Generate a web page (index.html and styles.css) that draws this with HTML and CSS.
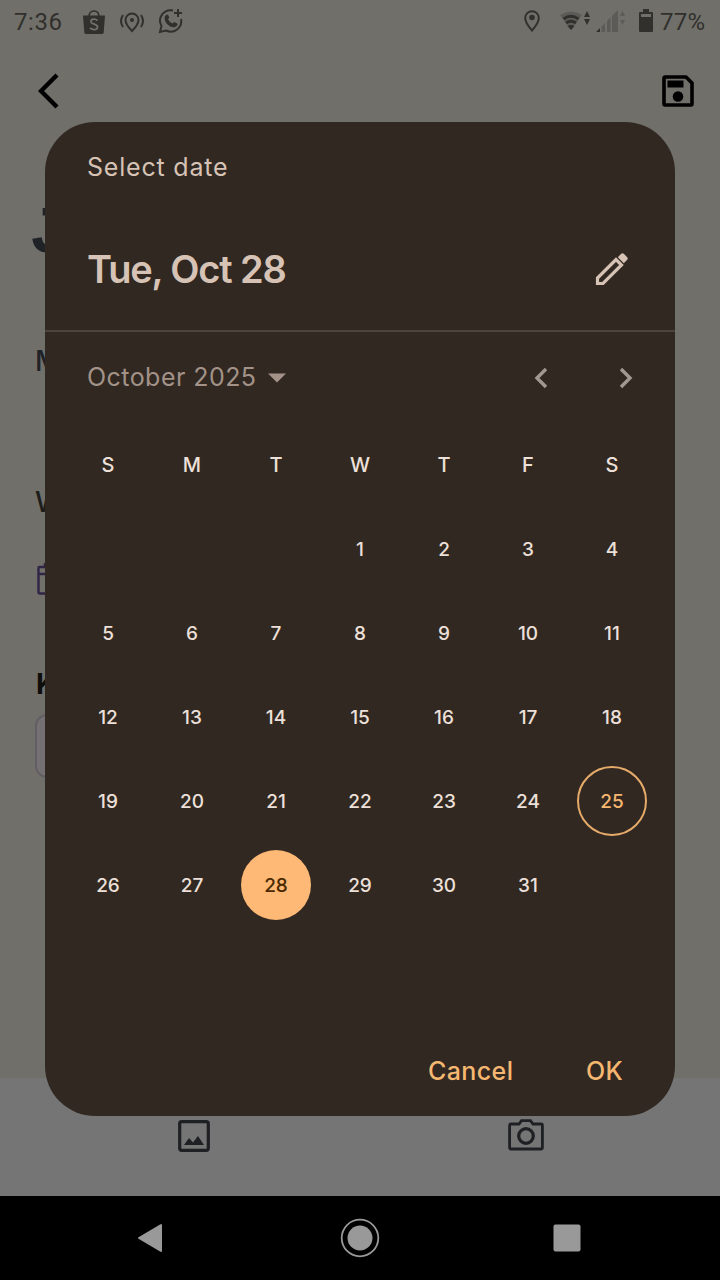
FILE: index.html
```html
<!DOCTYPE html>
<html lang="en">
<head>
<meta charset="utf-8">
<title>Select date</title>
<link rel="stylesheet" href="styles.css">
</head>
<body>
<div class="screen">
  <header class="status">
    <span class="clock">7:36</span>
    <svg class="s-bag" width="22" height="26" viewBox="0 0 22 26"><path d="M6 8C6 4 8 2 11 2s5 2 5 6" fill="none" stroke="#31302d" stroke-width="1.6"/><path d="M0 6.5h22l-1.300 17q-.1 1.500-1.700 1.500H3q-1.600 0-1.700-1.500z" fill="#31302d"/><path d="M14.500 11.500C12 9 7.500 10 8 13c.5 2.500 6.500 2 6.500 5 0 3-4.500 3.500-7.500 1" fill="none" stroke="#706f6a" stroke-width="1.800"/></svg>
    <svg class="s-cast" width="26" height="22" viewBox="0 0 26 22"><g fill="none" stroke="#31302d" stroke-width="2"><path d="M13 20C9 16 6.500 13 6.500 9a6.500 6.500 0 0 1 13 0c0 4-2.500 7-6.500 11z"/><path d="M4 4Q0 10 4 16M22 4q4 6 0 12"/></g><circle cx="13" cy="9" r="2" fill="#31302d"/></svg>
    <svg class="s-chat" width="26" height="26" viewBox="0 0 26 26"><g fill="none" stroke="#31302d" stroke-width="2"><path d="M15 2.500A10.500 10.500 0 0 0 3.500 18L2 24l6-1.500A10.500 10.500 0 0 0 23 11"/><path d="M20 1v8M16 5h8"/></g><path d="M7 8l2-1.500q1 0 1.500 1.200l.8 2-1.300 1.600q1.500 3 4.500 4.300l1.600-1.600 3.300 1.600q.6 2.500-2.400 3.400C12 20.500 5 14 7 8z" fill="#31302d"/></svg>
    <span class="grow"></span>
    <svg class="s-pin" width="16" height="22" viewBox="0 0 16 22"><path d="M8 20.500C4 16 1.200 12 1.200 8a6.800 6.800 0 0 1 13.600 0c0 4-2.800 8-6.800 12.500z" fill="none" stroke="#31302d" stroke-width="1.900"/><circle cx="8" cy="7.500" r="2.800" fill="#31302d"/></svg>
    <svg class="s-wifi" width="30" height="20" viewBox="0 0 30 20"><path d="M0 4Q11 -3 22 4L11 19z" fill="#5c5b57"/><path d="M3.500 8Q11 2.500 18.500 8M6 12q5-3.500 10 0" fill="none" stroke="#31302d" stroke-width="3"/><path d="M7.500 15Q11 13 14.500 15L11 19z" fill="#31302d"/><path d="M27 0l3 6h-6zM27 14l3-6h-6z" fill="#31302d"/></svg>
    <svg class="s-cell" width="29" height="22" viewBox="0 0 29 22"><path d="M0 22l4-4v4z" fill="#31302d"/><path d="M5.500 16.500L9 13v9H5.500zM11 11l3.500-3.500V22H11zM16 6l2-2v18h-2zM18 4l4-4v22h-4z" fill="#5c5b57"/><path d="M26.500 1l2.500 5h-5zM26.500 15l2.500-5h-5z" fill="#5c5b57"/></svg>
    <svg class="s-batt" width="14" height="23" viewBox="0 0 14 23"><path d="M4 0h6v3h3q1 0 1 1v18q0 1-1 1H1q-1 0-1-1V4q0-1 1-1h3z" fill="#31302d"/><path d="M2 5h10v3H2z" fill="#706f6a"/></svg>
    <span class="percent">77%</span>
  </header>
  <nav class="appbar">
    <svg width="22" height="36" viewBox="0 0 22 36"><path d="M19 2L3 18l16 16" fill="none" stroke="#000" stroke-width="4.400"/></svg>
    <svg width="32" height="32" viewBox="0 0 32 32"><path d="M3 2h21l6 6v21q0 1-1 1H3q-1 0-1-1V3q0-1 1-1z" fill="none" stroke="#000" stroke-width="3.600" stroke-linejoin="round"/><path d="M5.500 5.500h16v7h-16z"/><circle cx="16" cy="21.500" r="5.300"/></svg>
  </nav>
  <main class="form">
    <div class="heading">J</div>
    <div class="label label-m">M</div>
    <div class="label label-w">W</div>
    <svg class="cal" width="32" height="34" viewBox="0 0 32 34"><path d="M2 5h28v26.500H3q-1.500 0-1.500-1.500V6q0-1 1-1M2 12h28M8 1v4M24 1v4" fill="none" stroke="#302546" stroke-width="2.400"/></svg>
    <div class="label label-k">K</div>
    <div class="field"></div>
  </main>
  <footer class="tools">
    <svg class="t-photo" width="32" height="32" viewBox="0 0 32 32"><rect x="1.700" y="1.700" width="28.600" height="28.600" rx="2" fill="none" stroke="#1f2023" stroke-width="3.200"/><path d="M6 25l5-7 4 4.500 5-6.500 6 9z" fill="#1f2023"/></svg>
    <svg class="t-camera" width="36" height="32" viewBox="0 0 36 32"><path d="M3 5h8l2.500-3.400h9L25 5h8q1.400 0 1.400 1.400v22.200Q34.400 30 33 30H3q-1.400 0-1.400-1.400V6.400Q1.600 5 3 5z" fill="none" stroke="#1f2023" stroke-width="2.800"/><circle cx="18" cy="17" r="7.300" fill="none" stroke="#1f2023" stroke-width="3.200"/></svg>
  </footer>
  <div class="sysnav">
    <svg width="26" height="30" viewBox="0 0 26 30"><path d="M24 2v26L2 15z" fill="#999" stroke="#999" stroke-width="2" stroke-linejoin="round"/></svg>
    <svg width="40" height="40" viewBox="0 0 40 40"><circle cx="20" cy="20" r="18.300" fill="none" stroke="#999" stroke-width="1.800"/><circle cx="20" cy="20" r="12.500" fill="#999"/></svg>
    <svg width="28" height="28" viewBox="0 0 28 28"><rect x=".5" y=".5" width="27" height="27" rx="2" fill="#999"/></svg>
  </div>

  <section class="dialog">
    <div class="head">
      <div class="caption">Select date</div>
      <div class="title-row">
        <h1>Tue, Oct 28</h1>
        <svg width="34" height="34" viewBox="0 0 34 34"><path d="M2.500 31.500v-5.500L21 7.500l5.500 5.500L8 31.500z" fill="none" stroke="#d7c3b5" stroke-width="3.200"/><path d="M22.800 5.200l3.400-3.400q1.300-1 2.600 0l3.400 3.400q1 1.300 0 2.600l-3.400 3.400z" fill="#d7c3b5"/></svg>
      </div>
    </div>
    <div class="month-row">
      <span class="month">October 2025</span>
      <svg class="drop" width="18" height="10" viewBox="0 0 18 10"><path d="M0 .5h18l-9 9z" fill="#a29288"/></svg>
      <svg class="prev" width="14" height="22" viewBox="0 0 14 22"><path d="M12 2L3 11l9 9" fill="none" stroke="#a29890" stroke-width="3.400"/></svg>
      <svg class="next" width="14" height="22" viewBox="0 0 14 22"><path d="M2 2l9 9-9 9" fill="none" stroke="#a29890" stroke-width="3.400"/></svg>
    </div>
    <div class="grid">
      <span class="wd">S</span><span class="wd">M</span><span class="wd">T</span><span class="wd">W</span><span class="wd">T</span><span class="wd">F</span><span class="wd">S</span>
      <span class="first">1</span><span>2</span><span>3</span><span>4</span>
      <span>5</span><span>6</span><span>7</span><span>8</span><span>9</span><span>10</span><span>11</span>
      <span>12</span><span>13</span><span>14</span><span>15</span><span>16</span><span>17</span><span>18</span>
      <span>19</span><span>20</span><span>21</span><span>22</span><span>23</span><span>24</span><span class="today">25</span>
      <span>26</span><span>27</span><span class="selected">28</span><span>29</span><span>30</span><span>31</span>
    </div>
    <div class="actions"><span class="cancel">Cancel</span><span class="ok">OK</span></div>
  </section>
</div>
</body>
</html>
```

FILE: styles.css
```css
* { box-sizing: border-box; }
body { margin: 0; font-family: Inter, "Open Sans", sans-serif; }
svg { display: block; flex: none; }
.screen { position: relative; width: 720px; height: 1280px; overflow: hidden; background: #706f6a; display: flex; flex-direction: column; }

.status { height: 44px; display: flex; align-items: center; padding: 0 13px 0 14px; color: #31302d; font: 24px Roboto, sans-serif; }
.clock { width: 69px; letter-spacing: .6px; }
.s-cast { margin-left: 14px; }
.s-chat { margin-left: 13px; margin-top: -3px; }
.grow { flex: 1; }
.s-pin { margin-right: 20px; margin-top: -3px; }
.s-wifi { margin-right: 6px; margin-top: -2px; }
.s-cell { margin-right: 14px; margin-top: -2px; }
.s-batt { margin-right: 7px; margin-top: -3px; }
.percent { width: 47px; white-space: nowrap; letter-spacing: .3px; }

.appbar { height: 94px; display: flex; align-items: center; justify-content: space-between; padding: 0 26px 0 38px; }

.form { flex: 1; padding-left: 35px; color: #1f2226; }
.heading { height: 68px; margin-top: 59px; margin-left: -6px; padding-top: 4px; font: bold 66px/68px "Liberation Mono", monospace; }
.label { height: 34px; font: 500 28px/34px Inter, sans-serif; }
.label-m { margin-top: 79px; }
.label-w { margin-top: 107px; color: #1d1d1b; }
.cal { margin: 43px 0 0 2px; }
.label-k { margin-top: 71px; padding-left: 1px; font-weight: 700; color: #0e0e0d; }
.field { width: 300px; height: 64px; margin-top: 13px; border: 2px solid #625e64; border-radius: 12px; background: #747074; }

.tools { height: 118px; background: #757575; display: flex; align-items: flex-start; }
.t-photo { margin: 42px 0 0 178px; }
.t-camera { margin: 41px 0 0 298px; }

.sysnav { height: 84px; background: #000; display: flex; align-items: center; padding-left: 137px; }
.sysnav svg + svg { margin-left: 177px; }
.sysnav svg + svg + svg { margin-left: 173px; }

.dialog { position: absolute; left: 45px; top: 122px; width: 630px; height: 994px; border-radius: 50px; background: #312822; overflow: hidden; display: flex; flex-direction: column; }
.head { height: 210px; padding: 29px 46px 0 42px; border-bottom: 2px solid #4e433d; color: #d7c3b5; }
.caption { font-size: 25px; line-height: 32px; letter-spacing: .8px; }
.title-row { height: 50px; margin-top: 61px; display: flex; align-items: center; justify-content: space-between; }
h1 { margin: 0; font-size: 38px; line-height: 50px; font-weight: 600; letter-spacing: -1.15px; }
.month-row { height: 91px; display: flex; align-items: center; padding: 0 42px; color: #a29288; }
.month { font-size: 25px; letter-spacing: .45px; width: 182px; margin-top: -2px; white-space: nowrap; }
.prev { margin-left: 247px; }
.next { margin-left: 71px; }
.drop { margin-left: -1px; margin-right: 1px; }
.grid { display: grid; grid-template-columns: repeat(7, 84px); grid-auto-rows: 84px; padding-left: 21px; color: #ede0d9; font-size: 19px; font-weight: 500; justify-items: center; align-items: center; }
.grid span { width: 70px; height: 70px; line-height: 71px; text-align: center; border-radius: 50%; }
.grid .wd { font-size: 20px; line-height: 70px; }
.grid .first { grid-column: 4; }
.grid .today { border: 2px solid #e6ab69; line-height: 67px; color: #f6b770; }
.grid .selected { background: #fdb975; color: #4a2800; }
.actions { margin-top: 124px; display: flex; color: #f6b770; font-size: 25px; line-height: 40px; font-weight: 500; padding-left: 383px; letter-spacing: .4px; }
.cancel { width: 158px; }
```
